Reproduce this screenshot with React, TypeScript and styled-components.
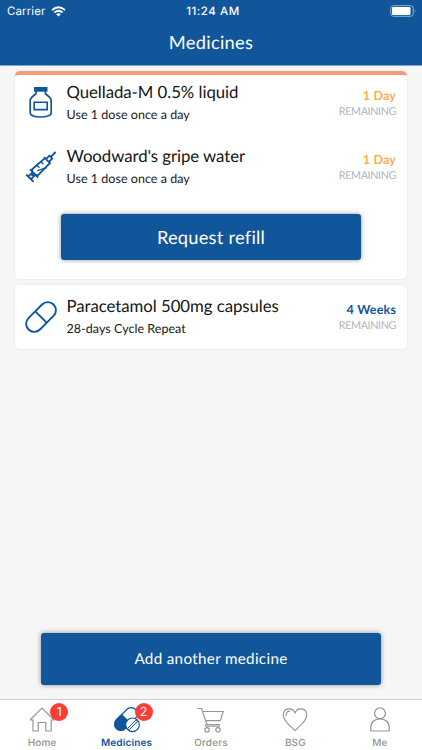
import React from "react";
import styled, { createGlobalStyle } from "styled-components";

const BLUE = "#11569b";

const GlobalStyle = createGlobalStyle`
  * { box-sizing: border-box; }
  body { margin: 0; background: #f6f6f6; }
`;

const Screen = styled.div`
  width: 422px;
  height: 750px;
  display: flex;
  flex-direction: column;
  overflow: hidden;
  background: #f6f6f6;
  color: #161616;
  font-family: Lato, "Liberation Sans", sans-serif;
  text-rendering: geometricPrecision;
`;

const Header = styled.header`
  height: 66px;
  background: ${BLUE};
  border-bottom: 1px solid #78a6d8;
  color: #fff;
`;

const StatusBar = styled.div`
  height: 22px;
  padding: 0 5px 0 7px;
  display: grid;
  grid-template-columns: 1fr auto 1fr;
  align-items: center;
  font-family: Inter, "Liberation Sans", sans-serif;
  font-size: 11.5px;
  line-height: 22px;
`;

const Carrier = styled.div`
  display: flex;
  align-items: center;
  gap: 6px;
  letter-spacing: 0.1px;
`;

const Clock = styled.div`
  font-weight: 500;
  letter-spacing: 0.55px;
  margin-right: -2px;
`;

const Battery = styled.svg`
  justify-self: end;
`;

const Title = styled.h1`
  margin: 0;
  text-align: center;
  font-size: 18.3px;
  font-weight: 400;
  line-height: 41px;
  letter-spacing: 0.27px;
`;

const Content = styled.main`
  flex: 1;
  display: flex;
  flex-direction: column;
  padding: 5px 15px 14px;
`;

const Card = styled.section<{ $due?: boolean }>`
  height: ${(p) => (p.$due ? 208 : 64)}px;
  margin-bottom: 6px;
  border-radius: 5px;
  border-top: ${(p) => (p.$due ? "4px solid #f29b76" : "0")};
  background: #fff;
  box-shadow: 0 0 3px rgba(0, 0, 0, 0.08);
`;

const Medicine = styled.article`
  height: 64px;
  display: grid;
  grid-template-columns: 51.5px 1fr auto;
  padding-right: 11px;
`;

const IconCell = styled.div<{ $top: number }>`
  padding: ${(p) => p.$top}px 0 0 9px;
  svg { display: block; }
`;

const Details = styled.div<{ $top: number }>`
  padding-top: ${(p) => p.$top}px;
  white-space: nowrap;
`;

const Name = styled.div`
  font-size: 16.8px;
  line-height: 24px;
  letter-spacing: -0.05px;
`;

const Note = styled.div`
  font-size: 12.5px;
  line-height: 22px;
  letter-spacing: 0.04px;
`;

const Remaining = styled.div<{ $top: number }>`
  padding-top: ${(p) => p.$top}px;
  text-align: right;
`;

const Period = styled.div<{ $due?: boolean }>`
  color: ${(p) => (p.$due ? "#f9ae4c" : BLUE)};
  font-size: 12.6px;
  font-weight: 700;
  line-height: 16px;
  letter-spacing: 0.15px;
  margin-right: -0.15px;
`;

const Caption = styled.div`
  color: #aeb5ba;
  font-size: 10.8px;
  line-height: 15px;
  letter-spacing: -0.4px;
`;

const Button = styled.button<{ $large?: boolean }>`
  display: block;
  width: ${(p) => (p.$large ? 300 : 340)}px;
  height: ${(p) => (p.$large ? 46 : 52)}px;
  margin: ${(p) => (p.$large ? "11px 0 0 46px" : "auto auto 0")};
  padding: 0;
  border: 0;
  border-radius: 3px;
  background: ${BLUE};
  box-shadow: 0 0 5px rgba(0, 0, 0, 0.42);
  color: #fff;
  font-family: inherit;
  text-rendering: inherit;
  font-size: ${(p) => (p.$large ? 18.3 : 15.2)}px;
  letter-spacing: ${(p) => (p.$large ? 0.23 : 0.33)}px;
`;

const TabBar = styled.nav`
  height: 51px;
  display: grid;
  grid-template-columns: repeat(5, 1fr);
  border-top: 1px solid #cfcfcf;
  background: #fff;
`;

const Tab = styled.a<{ $active?: boolean }>`
  display: flex;
  flex-direction: column;
  align-items: center;
  padding-top: 5px;
  color: ${(p) => (p.$active ? BLUE : "#929292")};
  font-family: Inter, "Liberation Sans", sans-serif;
  font-size: 10px;
  font-weight: ${(p) => (p.$active ? 600 : 500)};
  line-height: 15px;
  letter-spacing: 0.15px;
`;

const TabIcon = styled.span`
  position: relative;
  width: 32px;
  height: 31px;
  svg { display: block; }
`;

const Badge = styled.span`
  position: absolute;
  left: 24px;
  top: -2px;
  width: 18px;
  height: 18px;
  border-radius: 50%;
  background: #fc3d35;
  color: #fff;
  font-size: 12.5px;
  font-weight: 400;
  line-height: 19px;
  letter-spacing: 0;
  text-align: center;
`;

const Wifi = () => (
  <svg width="15" height="11" viewBox="0 0 15 11" fill="none" stroke="#fff" strokeWidth="1.8">
    <path d="M1 4.1Q7.5-1.7 14 4.1M3.4 6.5Q7.5 3 11.6 6.5" />
    <path d="M5.1 8.2Q7.5 6.1 9.9 8.2L7.5 10.6Z" fill="#fff" stroke="none" />
  </svg>
);

const BottleIcon = () => (
  <svg width="34" height="36" viewBox="0 0 34 36" fill="none" stroke={BLUE} strokeWidth="1.7">
    <path d="M10 2h13.5v4.7H10z" fill={BLUE} stroke="none" />
    <path d="M12 6v2.6C10 10.8 6.2 12.2 6.2 15.5v12.6c0 5.2 21 5.2 21 0V15.5c0-3.3-3.8-4.7-5.8-6.9V6" />
    <path d="M10.2 17.3h13v7.3h-13z" strokeWidth="1.6" />
  </svg>
);

const SyringeIcon = () => (
  <svg width="34" height="36" viewBox="0 0 34 36" fill="none" stroke={BLUE} strokeWidth="1.8">
    <path d="M31.7 3 27 7.7M20 8.2l6.6 6.6M22.4 9.6l2.9-2.9 2.9 2.9-2.9 2.9M20.9 9.1 8.2 20.2v5.9h5.9l12-12.3M6 20.3l8.2 8.2M8.9 23 4 27.9M11.5 25.6l-4.9 4.9M2.2 25.5l7.4 7.4" />
    <path d="m12.8 16.2 2.6 2.6m1.5-6.1 2.5 2.5m-6.2 6.4 9.6-2.9" strokeWidth="1.3" />
  </svg>
);

const CapsuleIcon = () => (
  <svg width="34" height="36" viewBox="0 0 34 36" fill="none" stroke={BLUE} strokeWidth="1.9">
    <g transform="rotate(-45 17 18)">
      <rect x="-.7" y="9.9" width="35.4" height="16.2" rx="8.1" />
      <path d="M17 10v16" />
    </g>
  </svg>
);

const HomeIcon = () => (
  <svg width="32" height="30" viewBox="0 0 32 30" fill="none" stroke="#969696" strokeWidth="1.2">
    <path d="M4 15 16 3l12 12h-2.8v11h-5.4v-8.5h-7.6V26H7V15H4" />
  </svg>
);

const PillsIcon = () => (
  <svg width="32" height="30" viewBox="0 0 32 30" fill="none" stroke={BLUE} strokeWidth="1.2">
    <g transform="rotate(-45 15 14)">
      <rect x="1.5" y="7.8" width="27" height="12.4" rx="6.2" fill="#fff" />
      <path d="M15 7.8H7.7a6.2 6.2 0 0 0 0 12.4H15z" fill={BLUE} />
    </g>
    <circle cx="21.5" cy="19.8" r="6.8" fill="#fff" />
    <path d="m16.7 23.3 8.2-8.2 1.5 1.5-8.2 8.2z" strokeWidth="1" />
  </svg>
);

const CartIcon = () => (
  <svg width="32" height="30" viewBox="0 0 32 30" fill="none" stroke="#969696" strokeWidth="1.2">
    <path d="M2.5 3.5h4l5.5 16M7.7 6.5h20.5l-2.9 9.2H11M25 19.5H12c-2.2.4-2 1.7 0 1.7h13" />
    <circle cx="12" cy="24.8" r="2.2" />
    <circle cx="23" cy="24.8" r="2.2" />
  </svg>
);

const HeartIcon = () => (
  <svg width="32" height="30" viewBox="0 0 32 30" fill="none" stroke="#969696" strokeWidth="1.2">
    <path d="M16 25.6C11.2 20.9 4.3 16 4.3 10.2 4.3 2.9 13.3 1.6 16 7.7c2.7-6.1 11.7-4.8 11.7 2.5 0 5.8-6.9 10.7-11.7 15.4zM7 11c-.2-3 1.5-5 4.2-4.8" />
  </svg>
);

const PersonIcon = () => (
  <svg width="32" height="30" viewBox="0 0 32 30" fill="none" stroke="#969696" strokeWidth="1.2">
    <circle cx="16" cy="8.3" r="5.4" />
    <path d="M6.8 26v-3.8c0-11.1 18.4-11.1 18.4 0V26z" />
  </svg>
);

const dueMedicines = [
  { name: "Quellada-M 0.5% liquid", icon: <BottleIcon /> },
  { name: "Woodward's gripe water", icon: <SyringeIcon /> },
];

const tabs = [
  { label: "Home", icon: <HomeIcon />, badge: 1 },
  { label: "Medicines", icon: <PillsIcon />, badge: 2, active: true },
  { label: "Orders", icon: <CartIcon /> },
  { label: "BSG", icon: <HeartIcon /> },
  { label: "Me", icon: <PersonIcon /> },
];

export default function App() {
  return (
    <Screen>
      <GlobalStyle />
      <Header>
        <StatusBar>
          <Carrier>Carrier <Wifi /></Carrier>
          <Clock>11:24 AM</Clock>
          <Battery width="27" height="12" viewBox="0 0 27 12">
            <rect x=".7" y=".7" width="22.6" height="10.6" rx="2.8" fill="none" stroke="#8db1d4" />
            <rect x="2" y="2" width="18.5" height="8" rx="1.2" fill="#fff" />
            <path d="M24.7 4q1.4 2 0 4z" fill="#8db1d4" />
          </Battery>
        </StatusBar>
        <Title>Medicines</Title>
      </Header>
      <Content>
        <Card $due>
          {dueMedicines.map((m) => (
            <Medicine key={m.name}>
              <IconCell $top={10}>{m.icon}</IconCell>
              <Details $top={5}>
                <Name>{m.name}</Name>
                <Note>Use 1 dose once a day</Note>
              </Details>
              <Remaining $top={13}>
                <Period $due>1 Day</Period>
                <Caption>REMAINING</Caption>
              </Remaining>
            </Medicine>
          ))}
          <Button $large>Request refill</Button>
        </Card>
        <Card>
          <Medicine>
            <IconCell $top={14}><CapsuleIcon /></IconCell>
            <Details $top={9}>
              <Name>Paracetamol 500mg capsules</Name>
              <Note>28-days Cycle Repeat</Note>
            </Details>
            <Remaining $top={17}>
              <Period>4 Weeks</Period>
              <Caption>REMAINING</Caption>
            </Remaining>
          </Medicine>
        </Card>
        <Button>Add another medicine</Button>
      </Content>
      <TabBar>
        {tabs.map((t) => (
          <Tab key={t.label} $active={t.active}>
            <TabIcon>
              {t.icon}
              {t.badge && <Badge>{t.badge}</Badge>}
            </TabIcon>
            {t.label}
          </Tab>
        ))}
      </TabBar>
    </Screen>
  );
}
